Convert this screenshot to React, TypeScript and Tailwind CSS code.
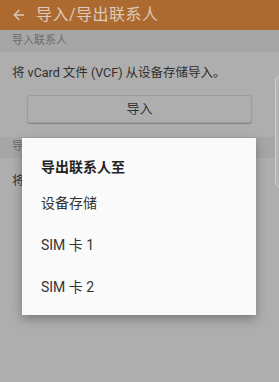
import { ArrowLeft } from 'lucide-react'

const FONT = { fontFamily: 'Roboto, "Noto Sans CJK SC", "Noto Sans", sans-serif' }

const EXPORT_TARGETS = ['设备存储', 'SIM 卡 1', 'SIM 卡 2']

export default function App() {
  return (
    <div className="relative w-[279px] h-[382px] overflow-hidden bg-[#aeaeae]" style={FONT}>
      {/* Header */}
      <header className="h-[30px] bg-[#ac6a31] flex items-center pl-[11px] gap-[9px]">
        <ArrowLeft size={16} strokeWidth={2} className="text-[#dccbbb]" />
        <span className="text-[16px] leading-none text-[#dccbbb] tracking-[0.5px]">导入/导出联系人</span>
      </header>

      {/* Import section */}
      <div className="h-[22px] bg-[#a6a6a6] flex items-center px-[12px]">
        <span className="text-[11px] text-[#6c6c6c]">导入联系人</span>
      </div>
      <div className="px-[12px] pt-[12px]">
        <p className="text-[12.5px] leading-[18px] text-[#2e2e2e]">将 vCard 文件 (VCF) 从设备存储导入。</p>
        <div className="mx-[15px] mt-[13px] h-[28px] rounded-[3px] border border-[#9c9c9c] shadow-[0_1px_1px_rgba(0,0,0,0.25)] flex items-center justify-center">
          <span className="text-[13px] text-[#333]">导入</span>
        </div>
      </div>

      {/* Export section */}
      <div className="mt-[14px] h-[21px] bg-[#a6a6a6] flex items-center px-[12px]">
        <span className="text-[11px] text-[#6c6c6c]">导出联系人</span>
      </div>
      <div className="px-[12px] pt-[14px]">
        <p className="text-[12.5px] leading-[18px] text-[#2e2e2e]">将联系人导出到设备存储。</p>
      </div>

      {/* edge of next panel */}
      <div className="absolute left-[275px] top-[75px] w-[10px] h-[113px] rounded-l-[6px] border border-[#cfcfcf] bg-[#b4b4b4]" />

      {/* Dialog */}
      <div className="absolute left-[22px] top-[138px] w-[234px] h-[177px] bg-[#fafafa] shadow-[0_4px_10px_rgba(0,0,0,0.3)] pl-[19px] pt-[18px]">
        <div className="text-[14px] font-bold leading-[22px] text-[#222]">导出联系人至</div>
        <div className="mt-[4px] flex flex-col">
          {EXPORT_TARGETS.map((t) => (
            <div key={t} className="h-[42px] flex items-center text-[14px] text-[#333]">
              {t}
            </div>
          ))}
        </div>
      </div>
    </div>
  )
}
